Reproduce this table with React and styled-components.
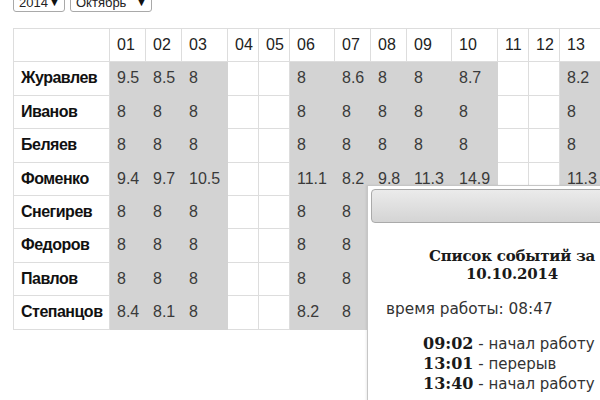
import styled, { createGlobalStyle } from "styled-components";

const GlobalStyle = createGlobalStyle`
  html, body {
    margin: 0;
    padding: 0;
    background: #fff;
    overflow: hidden;
  }
  body {
    font-family: "Liberation Sans", Arial, sans-serif;
  }
`;

const Page = styled.div`
  position: relative;
  display: flow-root;
  width: 600px;
  height: 400px;
  padding-left: 13px;
  box-sizing: border-box;
`;

const Filters = styled.div`
  display: flex;
  gap: 5px;
  margin-top: -8px;
`;

const Select = styled.div`
  display: flex;
  align-items: center;
  justify-content: space-between;
  box-sizing: border-box;
  width: ${(props) => props.$w}px;
  height: 20px;
  padding: 0 4px 0 5px;
  border: 1px solid #a9a9a9;
  border-radius: 3px;
  background: #fff;
  font-size: 13px;
  color: #222;

  .arrow {
    font-size: 11px;
    color: #111;
  }
`;

const Table = styled.table`
  margin-top: 16px;
  border-collapse: collapse;
  border: 1px solid #ddd;
  font-size: 16px;
  line-height: 18.4px;
  white-space: nowrap;
`;

const Th = styled.th`
  box-sizing: border-box;
  width: ${(props) => props.$w}px;
  min-width: ${(props) => props.$w}px;
  padding: 7px 5px 7px 7px;
  border: 1px solid #ddd;
  font-weight: normal;
  text-align: left;
  color: #222;
  background: #fff;
`;

const Name = styled.td`
  padding: 7px 3px 7px 7px;
  border: 1px solid #ddd;
  font-weight: bold;
  letter-spacing: -0.5px;
  color: #111;
  background: #fff;
`;

const Cell = styled.td`
  padding: 7px 5px 7px 7px;
  border: 1px solid ${(props) => (props.$work ? "#d3d3d3" : "#ddd")};
  background: ${(props) => (props.$work ? "#d3d3d3" : "#fff")};
  color: #3a3a3a;
`;

const Dialog = styled.div`
  position: absolute;
  left: 367px;
  top: 185px;
  width: 300px;
  height: 260px;
  box-sizing: border-box;
  padding: 3px;
  background: #fff;
  border: 1px solid #c6c6c6;
  box-shadow: -1px 0 2px rgba(0, 0, 0, 0.08);
`;

const TitleBar = styled.div`
  height: 34px;
  box-sizing: border-box;
  border: 1px solid #aaa;
  border-radius: 4px;
  background: linear-gradient(#ebebeb, #d4d4d4);
`;

const Content = styled.div`
  padding: 24px 0 0 15px;
  color: #222;
`;

const Heading = styled.h3`
  margin: 0;
  width: 252px;
  text-align: center;
  font-family: "DejaVu Serif", serif;
  font-size: 15px;
  line-height: 18px;
  font-weight: bold;
  letter-spacing: -0.2px;
  color: #1a1a1a;
`;

const WorkTime = styled.p`
  margin: 17px 0 0 0;
  font-family: "DejaVu Sans", Verdana, sans-serif;
  font-size: 15.3px;
  color: #333;
`;

const Events = styled.ul`
  list-style: none;
  margin: 16px 0 0;
  padding-left: 37px;
  font-family: "DejaVu Sans", Verdana, sans-serif;
  font-size: 15px;
  line-height: 20px;
  color: #333;

  b {
    font-family: "DejaVu Serif", serif;
    font-size: 16px;
    color: #1a1a1a;
  }
`;

const weekend = [4, 5, 11, 12, 18, 19, 25, 26];

const widths = {
  1: 36, 2: 36, 3: 46, 4: 31, 5: 31, 6: 45, 7: 36, 8: 36, 9: 45, 10: 46,
  11: 31, 12: 31, 13: 45,
};

const days = Array.from({ length: 31 }, (_, i) => i + 1);

const people = [
  ["Журавлев", { 1: "9.5", 2: "8.5", 7: "8.6", 10: "8.7", 13: "8.2" }],
  ["Иванов", {}],
  ["Беляев", {}],
  ["Фоменко", { 1: "9.4", 2: "9.7", 3: "10.5", 6: "11.1", 7: "8.2", 8: "9.8", 9: "11.3", 10: "14.9", 13: "11.3" }],
  ["Снегирев", {}],
  ["Федоров", {}],
  ["Павлов", {}],
  ["Степанцов", { 1: "8.4", 2: "8.1", 6: "8.2" }],
];

const events = [
  ["09:02", "начал работу"],
  ["13:01", "перерыв"],
  ["13:40", "начал работу"],
];

const pad = (n) => String(n).padStart(2, "0");

const App = () => {
  return (
    <>
      <GlobalStyle />
      <Page>
        <Filters>
          <Select $w={52}>
            <span>2014</span>
            <span className="arrow">▼</span>
          </Select>
          <Select $w={82}>
            <span>Октябрь</span>
            <span className="arrow">▼</span>
          </Select>
        </Filters>

        <Table>
          <thead>
            <tr>
              <Th $w={96}></Th>
              {days.map((d) => (
                <Th key={d} $w={widths[d] || 45}>
                  {pad(d)}
                </Th>
              ))}
            </tr>
          </thead>
          <tbody>
            {people.map(([name, hours]) => (
              <tr key={name}>
                <Name>{name}</Name>
                {days.map((d) => {
                  const work = !weekend.includes(d);
                  return (
                    <Cell key={d} $work={work}>
                      {work ? hours[d] || "8" : ""}
                    </Cell>
                  );
                })}
              </tr>
            ))}
          </tbody>
        </Table>

        <Dialog>
          <TitleBar />
          <Content>
            <Heading>
              Список событий за
              <br />
              10.10.2014
            </Heading>
            <WorkTime>время работы: 08:47</WorkTime>
            <Events>
              {events.map(([time, label]) => (
                <li key={time}>
                  <b>{time}</b> - {label}
                </li>
              ))}
            </Events>
          </Content>
        </Dialog>
      </Page>
    </>
  );
};

export default App;
